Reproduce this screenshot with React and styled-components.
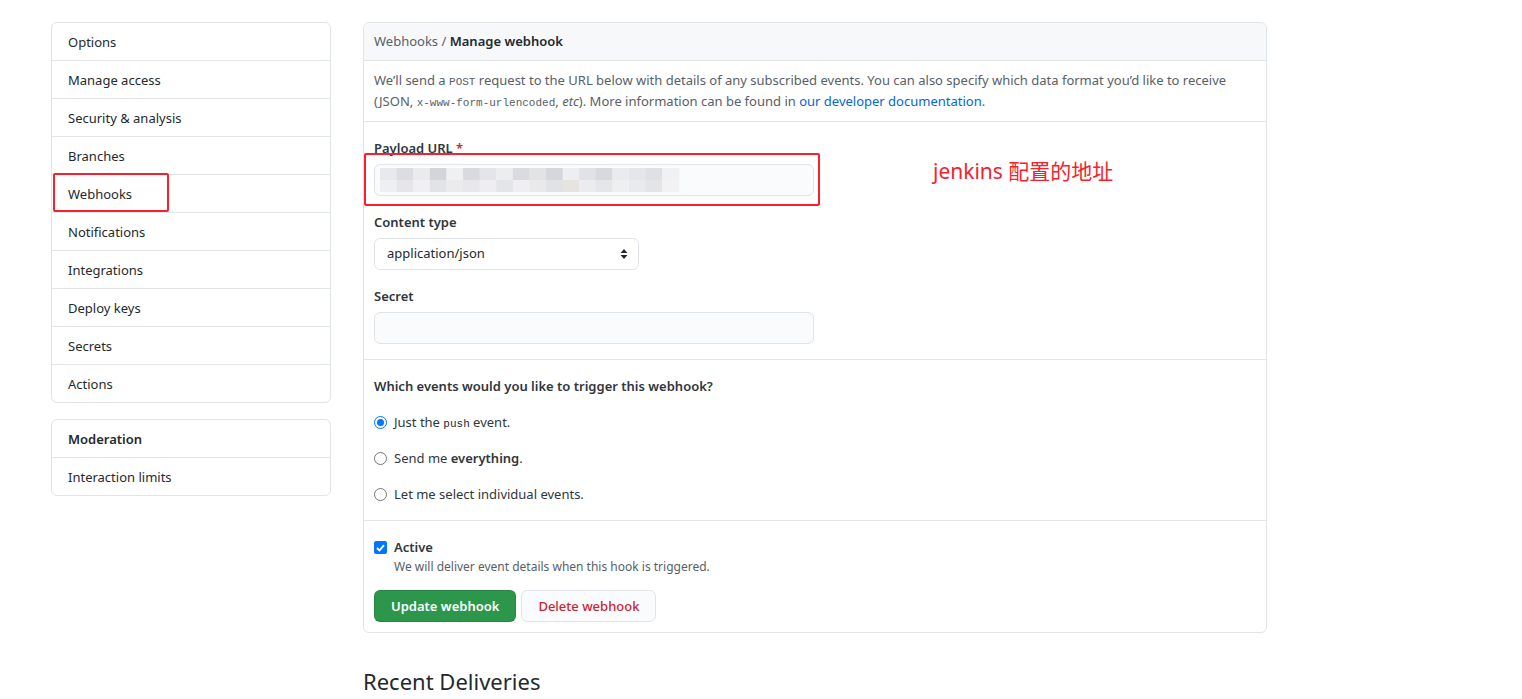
import React from "react";
import styled, { createGlobalStyle } from "styled-components";

const GlobalStyle = createGlobalStyle`
  body {
    margin: 0;
    background: #fff;
    font-family: "Noto Sans", "Noto Sans CJK SC", sans-serif;
    font-size: 13px;
    line-height: 1.5;
    color: #24292e;
  }
  * { box-sizing: border-box; }
`;

const Page = styled.div`
  display: flex;
  align-items: flex-start;
  gap: 32px;
  padding: 22px 0 0 51px;
`;

const Sidebar = styled.div`
  width: 280px;
  display: flex;
  flex-direction: column;
  gap: 16px;
`;

const Menu = styled.nav`
  border: 1px solid #e1e4e8;
  border-radius: 6px;
`;

const MenuItem = styled.div`
  position: relative;
  padding: 9px 16px 7px;
  line-height: 21px;
  font-weight: ${(p) => (p.$heading ? 600 : 400)};
  color: #24292e;
  border-bottom: 1px solid #e1e4e8;
  &:last-child { border-bottom: none; }
`;

const Highlight = styled.span`
  position: absolute;
  left: 1px;
  top: -2px;
  width: 116px;
  height: 39px;
  border: 2px solid #f5222d;
  border-radius: 2px;
  pointer-events: none;
`;

const Main = styled.div`
  width: 904px;
`;

const Box = styled.div`
  border: 1px solid #e1e4e8;
  border-radius: 6px;
`;

const BoxHeader = styled.div`
  padding: 8px 10px;
  line-height: 21px;
  background: #f6f8fa;
  border-bottom: 1px solid #e1e4e8;
  border-radius: 6px 6px 0 0;
  color: #586069;
  strong { color: #24292e; font-weight: 600; }
`;

const BoxRow = styled.div`
  padding: ${(p) => p.$pad || "15px 10px"};
  border-bottom: 1px solid #e1e4e8;
  &:last-child { border-bottom: none; }
`;

const Lead = styled.p`
  margin: 0;
  color: #586069;
  line-height: 21px;
  a { color: #0366d6; text-decoration: none; }
`;

const Code = styled.code`
  font-family: "Liberation Mono", "DejaVu Sans Mono", monospace;
  font-size: 11px;
  line-height: 1;
  color: ${(p) => p.$color || "#586069"};
`;

const FormStack = styled.div`
  display: flex;
  flex-direction: column;
  gap: 16px;
`;

const Group = styled.div`
  position: relative;
  display: flex;
  flex-direction: column;
  align-items: flex-start;
  gap: 5px;
`;

const Label = styled.label`
  font-weight: 600;
  line-height: 21px;
  color: #2f363d;
  span { color: #cb2431; }
`;

const Input = styled.div`
  width: ${(p) => p.$w || "440px"};
  height: 32px;
  background: #fafbfc;
  border: 1px solid #e1e4e8;
  border-radius: 6px;
  display: flex;
  align-items: center;
  padding: 0 5px;
`;

const Select = styled.div`
  width: 265px;
  height: 32px;
  background: #fff;
  border: 1px solid #e1e4e8;
  border-radius: 6px;
  display: flex;
  align-items: center;
  justify-content: space-between;
  padding: 0 10px 0 12px;
  color: #24292e;
`;

const Annotation = styled.div`
  position: absolute;
  left: -10px;
  top: 15px;
  width: 456px;
  height: 53px;
  border: 2px solid #f5222d;
  border-radius: 2px;
  pointer-events: none;
`;

const Note = styled.div`
  position: absolute;
  left: 559px;
  top: 18px;
  color: #f5222d;
  font-size: 21px;
  line-height: 30px;
  white-space: nowrap;
`;

const Question = styled.div`
  font-weight: 600;
  line-height: 21px;
  color: #2f363d;
  margin-bottom: 15px;
`;

const Choices = styled.div`
  display: flex;
  flex-direction: column;
  gap: 15px;
`;

const Choice = styled.label`
  display: flex;
  align-items: center;
  gap: 7px;
  line-height: 21px;
  color: #2f363d;
  b { font-weight: 600; }
`;

const Radio = styled.span`
  width: 13px;
  height: 13px;
  border-radius: 50%;
  border: 1px solid ${(p) => (p.$on ? "#0075ff" : "#767676")};
  background: #fff;
  display: inline-flex;
  align-items: center;
  justify-content: center;
  &::after {
    content: "";
    width: 7px;
    height: 7px;
    border-radius: 50%;
    background: ${(p) => (p.$on ? "#0075ff" : "transparent")};
  }
`;

const Check = styled.span`
  width: 13px;
  height: 13px;
  border-radius: 2px;
  background: #0075ff;
  display: inline-flex;
  align-items: center;
  justify-content: center;
`;

const Hint = styled.div`
  font-size: 12px;
  line-height: 18px;
  color: #586069;
  padding-left: 20px;
`;

const Actions = styled.div`
  display: flex;
  gap: 5px;
  margin-top: 14px;
`;

const Button = styled.button`
  height: 32px;
  padding: 0 16px;
  border-radius: 6px;
  font-family: inherit;
  font-size: 13px;
  border: 1px solid ${(p) => (p.$primary ? "rgba(27,31,35,0.15)" : "#e1e4e8")};
  background: ${(p) => (p.$primary ? "#2c974b" : "#fafbfc")};
  color: ${(p) => (p.$primary ? "#fff" : "#cb2431")};
  font-weight: ${(p) => (p.$primary ? 600 : 500)};
`;

const Title = styled.h2`
  margin: 30px 0 0;
  font-size: 22px;
  font-weight: 400;
  line-height: 36px;
  color: #24292e;
`;

const menu = [
  "Options",
  "Manage access",
  "Security & analysis",
  "Branches",
  "Webhooks",
  "Notifications",
  "Integrations",
  "Deploy keys",
  "Secrets",
  "Actions",
];

// pixelated blur where the real URL was
const Mosaic = () => {
  const shades = [
    ["#e8e9ec", "#dcdde0", "#eaebed", "#d4d5d9", "#f0f0f2", "#d9dadd", "#e4e5e8", "#ededef", "#dadbde", "#e3e3e6", "#d6d7da", "#eeeef0", "#e1e2e5", "#d8d9dc", "#ebebed", "#e5e6e9", "#dfe0e3", "#f1f1f3"],
    ["#eeeff1", "#e6e6e9", "#f0f0f2", "#e2e3e6", "#ebebed", "#e8e8eb", "#eeeef0", "#e4e5e8", "#efeff1", "#e9e9ec", "#e1e2e5", "#e6e3e0", "#ececef", "#e5e6e8", "#efeff1", "#e9eaec", "#e4e4e7", "#f2f2f4"],
  ];
  return (
    <svg width="300" height="24" viewBox="0 0 300 24">
      {shades.map((row, r) =>
        row.map((c, i) => (
          <rect key={`${r}-${i}`} x={i * 16.6} y={r * 12} width="17" height="12" fill={c} />
        ))
      )}
    </svg>
  );
};

export default function App() {
  return (
    <>
      <GlobalStyle />
      <Page>
        <Sidebar>
          <Menu>
            {menu.map((m) => (
              <MenuItem key={m}>
                {m}
                {m === "Webhooks" && <Highlight />}
              </MenuItem>
            ))}
          </Menu>
          <Menu>
            <MenuItem $heading>Moderation</MenuItem>
            <MenuItem>Interaction limits</MenuItem>
          </Menu>
        </Sidebar>

        <Main>
          <Box>
            <BoxHeader>
              Webhooks / <strong>Manage webhook</strong>
            </BoxHeader>
            <BoxRow $pad="9px 10px">
              <Lead>
                We’ll send a <Code>POST</Code> request to the URL below with details of any
                subscribed events. You can also specify which data format you’d like to receive
                (JSON, <Code>x-www-form-urlencoded</Code>, <em>etc</em>). More information can be
                found in <a href="#docs">our developer documentation</a>.
              </Lead>
            </BoxRow>
            <BoxRow $pad="16px 10px 15px">
              <FormStack>
                <Group>
                  <Label>
                    Payload URL <span>*</span>
                  </Label>
                  <Input>
                    <Mosaic />
                  </Input>
                  <Annotation />
                  <Note>jenkins 配置的地址</Note>
                </Group>
                <Group>
                  <Label>Content type</Label>
                  <Select>
                    application/json
                    <svg width="8" height="12" viewBox="0 0 8 12">
                      <path d="M4 1 L7.5 5 H0.5 Z M4 11 L0.5 7 H7.5 Z" fill="#24292e" />
                    </svg>
                  </Select>
                </Group>
                <Group>
                  <Label>Secret</Label>
                  <Input />
                </Group>
              </FormStack>
            </BoxRow>
            <BoxRow $pad="16px 10px 15px">
              <Question>Which events would you like to trigger this webhook?</Question>
              <Choices>
                <Choice>
                  <Radio $on />
                  <span>
                    Just the <Code $color="#24292e">push</Code> event.
                  </span>
                </Choice>
                <Choice>
                  <Radio />
                  <span>
                    Send me <b>everything</b>.
                  </span>
                </Choice>
                <Choice>
                  <Radio />
                  <span>Let me select individual events.</span>
                </Choice>
              </Choices>
            </BoxRow>
            <BoxRow $pad="16px 10px 10px">
              <Choice>
                <Check>
                  <svg width="9" height="8" viewBox="0 0 9 8">
                    <path d="M1 4 L3.5 6.5 L8 1.2" stroke="#fff" strokeWidth="1.8" fill="none" />
                  </svg>
                </Check>
                <b>Active</b>
              </Choice>
              <Hint>We will deliver event details when this hook is triggered.</Hint>
              <Actions>
                <Button $primary>Update webhook</Button>
                <Button>Delete webhook</Button>
              </Actions>
            </BoxRow>
          </Box>
          <Title>Recent Deliveries</Title>
        </Main>
      </Page>
    </>
  );
}
